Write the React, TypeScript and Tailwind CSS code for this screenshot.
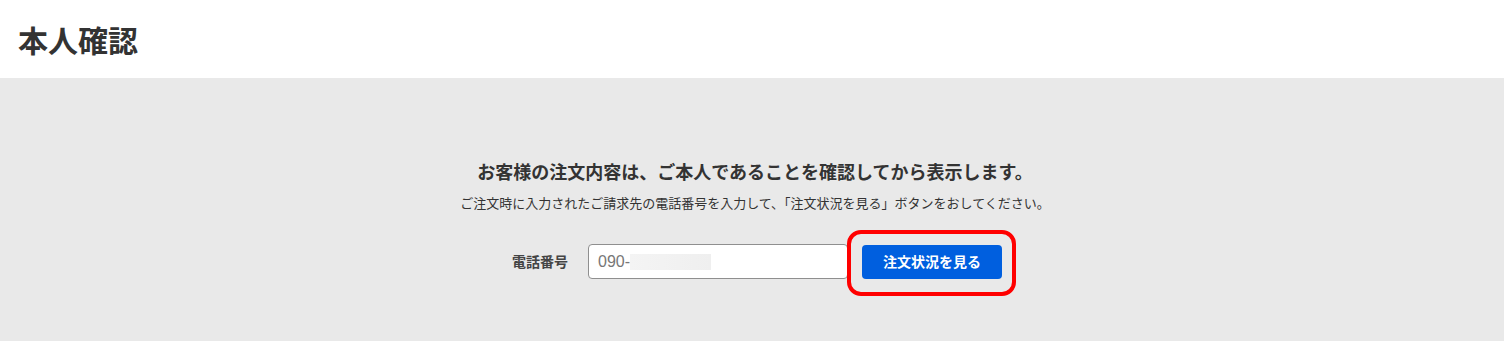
import React from "react";

export default function App() {
  return (
    <div className="w-full h-[341px] flex flex-col bg-white text-[#333] font-['Noto_Sans_CJK_JP',sans-serif]">
      {/* Header */}
      <div className="h-[78px] flex items-center px-[18px] bg-white">
        <h1 className="text-[30px] font-bold leading-none text-[#333]">本人確認</h1>
      </div>

      {/* Main */}
      <div className="flex-1 bg-[#e9e9e9] flex flex-col items-center pt-[80px] pl-[6px]">
        <h2 className="text-[18px] font-bold leading-[27px] text-[#333]">
          お客様の注文内容は、ご本人であることを確認してから表示します。
        </h2>
        <p className="mt-[8px] text-[13px] leading-[20px] text-[#333]">
          ご注文時に入力されたご請求先の電話番号を入力して、「注文状況を見る」ボタンをおしてください。
        </p>

        <div className="mt-[31px] flex items-center pl-[4px]">
          <label className="text-[14px] font-bold text-[#444] mr-[20px]">電話番号</label>
          <div className="w-[260px] h-[35px] bg-white border border-[#8f8f8f] rounded-[4px] flex items-center pl-[9px]">
            <span className="text-[16px] text-[#777] font-['Liberation_Sans',sans-serif]">090-</span>
            <span className="w-[81px] h-[16px] bg-gradient-to-r from-[#f4f4f4] to-[#efefef]" />
          </div>
          <div className="relative ml-[14px]">
            <button className="w-[140px] h-[34px] bg-[#005fdf] rounded-[4px] text-white text-[14px] font-bold">
              注文状況を見る
            </button>
            <div className="absolute -left-[15px] -right-[14px] -top-[15px] -bottom-[17px] border-[4px] border-[#ff0000] rounded-[14px] pointer-events-none" />
          </div>
        </div>
      </div>
    </div>
  );
}
